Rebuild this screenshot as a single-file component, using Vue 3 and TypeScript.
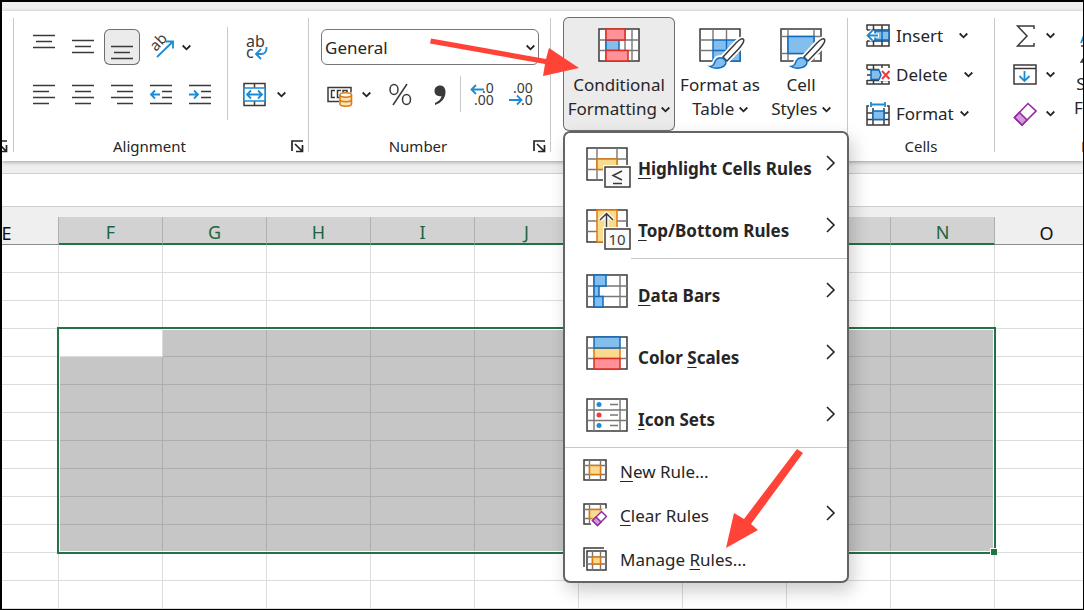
<script setup lang="ts">
import { h, ref } from 'vue'

const Chevron = () =>
  h('svg', { class: 'chev', width: 9, height: 7, viewBox: '0 0 9 7', 'aria-hidden': 'true' }, [
    h('path', { d: 'M.7 1.500l3.800 3.800 3.800-3.800', fill: 'none', stroke: '#242424', 'stroke-width': 1.8 }),
  ])

const Launcher = () =>
  h('svg', { width: 13, height: 13, viewBox: '0 0 13 13', 'aria-hidden': 'true' }, [
    h('path', { d: 'M1 11V1h11M4 4l7 7M11.500 5v6.500H5', fill: 'none', stroke: '#242424', 'stroke-width': 1.7 }),
  ])

const Arrow = () =>
  h('svg', { class: 'more', width: 10, height: 16, viewBox: '0 0 10 16', 'aria-hidden': 'true' }, [
    h('path', { d: 'M1 1l7 7-7 7', fill: 'none', stroke: '#242424', 'stroke-width': 1.6 }),
  ])

interface Tool {
  name: string
  lines: string
  accent?: string
}

const vertical: Tool[] = [
  { name: 'Top Align', lines: 'M7 6.500h22M10 12.500h16M7 18.500h22' },
  { name: 'Middle Align', lines: 'M7 11.500h22M10 17.500h16M7 23.500h22' },
  { name: 'Bottom Align', lines: 'M7 17.500h22M10 23.500h16M7 29.500h22' },
]

const horizontal: Tool[] = [
  { name: 'Align Left', lines: 'M7 9.500h22M7 15.500h16M7 21.500h22M7 27.500h16' },
  { name: 'Center', lines: 'M7 9.500h22M10 15.500h16M7 21.500h22M10 27.500h16' },
  { name: 'Align Right', lines: 'M7 9.500h22M13 15.500h16M7 21.500h22M13 27.500h16' },
  { name: 'Decrease Indent', lines: 'M7 9.500h22M19 15.500h10M19 21.500h10M7 27.500h22', accent: 'M17 18.500H8M12 14.500l-4 4 4 4' },
  { name: 'Increase Indent', lines: 'M7 9.500h22M19 15.500h10M19 21.500h10M7 27.500h22', accent: 'M7 18.500h9M12 14.500l4 4-4 4' },
]

const numberFormat = ref('General')
const pressed = ref('Bottom Align')

const columns = ['E', 'F', 'G', 'H', 'I', 'J', 'K', 'L', 'M', 'N', 'O']
const rowCount = 13
const isSelectedColumn = (c: number) => c >= 1 && c <= 9
const isSelected = (r: number, c: number) => r >= 4 && r <= 11 && isSelectedColumn(c) && !(r === 4 && c === 1)
</script>

<template>
  <main class="window">
    <header class="ribbon">
      <section class="group cut">
        <button class="launch" aria-label="Font settings"><Launcher /></button>
      </section>
      <span class="sep"></span>

      <section class="group alignment">
        <div class="tools">
          <div class="cluster">
            <div class="row">
              <button
                v-for="t in vertical"
                :key="t.name"
                class="tool"
                :class="{ pressed: pressed === t.name }"
                :aria-label="t.name"
                @click="pressed = t.name"
              >
                <svg width="36" height="36" viewBox="0 0 36 36"><path :d="t.lines" class="ink" /></svg>
              </button>
              <button class="tool split" aria-label="Orientation">
                <svg width="36" height="36" viewBox="0 0 36 36">
                  <text x="13" y="23" transform="rotate(-47 13 23)" class="glyph" font-size="15">ab</text>
                  <path d="M14 28L30 12.500M23 12.500h7v7" class="blue" />
                </svg>
                <Chevron />
              </button>
            </div>
            <div class="row">
              <button v-for="t in horizontal" :key="t.name" class="tool" :aria-label="t.name">
                <svg width="36" height="36" viewBox="0 0 36 36">
                  <path :d="t.lines" class="ink" />
                  <path v-if="t.accent" :d="t.accent" class="blue" />
                </svg>
              </button>
            </div>
          </div>
          <span class="sep inner"></span>
          <div class="cluster">
            <button class="tool" aria-label="Wrap Text">
              <svg width="36" height="36" viewBox="0 0 36 36">
                <text x="10" y="18" class="glyph" font-size="16">ab</text>
                <text x="10" y="29" class="glyph" font-size="16">c</text>
                <path d="M30.500 18c.5 4-1.500 7-5 7h-5M25 20l-5 5 5 5" class="blue" />
              </svg>
            </button>
            <button class="tool split" aria-label="Merge and Center">
              <svg width="36" height="36" viewBox="0 0 36 36">
                <path d="M8 7.500h21v22H8zM18.500 8v4M18.500 25v4" class="ink" />
                <path d="M8 12h21v13H8z" fill="#fff" stroke="#1e8bd2" stroke-width="1.500" />
                <path d="M11 18.500h15M15 14.500l-4 4 4 4M22 14.500l4 4-4 4" class="blue" />
              </svg>
              <Chevron />
            </button>
          </div>
        </div>
        <footer class="caption">
          <h2>Alignment</h2>
          <button class="launch" aria-label="Alignment settings"><Launcher /></button>
        </footer>
      </section>
      <span class="sep"></span>

      <section class="group number">
        <div class="tools">
          <div class="cluster">
            <div class="combo">
              <select v-model="numberFormat" aria-label="Number Format">
                <option>General</option>
              </select>
              <Chevron />
            </div>
            <div class="row">
              <button class="tool split" aria-label="Accounting Number Format">
                <svg width="36" height="36" viewBox="0 0 36 36">
                  <path d="M18 25.500H7v-14h23v5" class="ink" />
                  <path d="M14 14.500h-3.500v7H14M20 14.500h-3.500v7h2M22 16.500v-2h4v2" class="ink" />
                  <path d="M19 19v9c0 3 11.500 3 11.500 0v-9" fill="#fbe3b8" stroke="#e07a10" stroke-width="1.600" />
                  <ellipse cx="24.750" cy="19" rx="5.750" ry="2.200" fill="#fff" stroke="#e07a10" stroke-width="1.600" />
                  <path d="M19 23.500c0 3 11.500 3 11.500 0" fill="none" stroke="#e07a10" stroke-width="1.600" />
                </svg>
                <Chevron />
              </button>
              <button class="tool" aria-label="Percent Style">
                <svg width="36" height="36" viewBox="0 0 36 36">
                  <path d="M25 8L11 29" class="ink" />
                  <ellipse cx="12" cy="13.500" rx="4" ry="5" class="ink" />
                  <ellipse cx="24.500" cy="23.500" rx="4" ry="5" class="ink" />
                </svg>
              </button>
              <button class="tool" aria-label="Comma Style">
                <svg width="36" height="36" viewBox="0 0 36 36">
                  <path d="M19 9.500c3.500 0 5.500 2.500 5.500 6.500 0 6-4 11-10.500 13v-2c4-1.800 6-4 6.500-7-4 1-7-1.500-7-5 0-3.200 2.300-5.500 5.500-5.500z" fill="#3b3a39" />
                </svg>
              </button>
              <span class="sep"></span>
              <button class="tool" aria-label="Increase Decimal">
                <svg width="36" height="36" viewBox="0 0 36 36">
                  <text x="18" y="17" class="glyph" font-size="14">.0</text>
                  <text x="10" y="29" class="glyph" font-size="14">.00</text>
                  <path d="M20 13.500H7.500M12 9l-4.500 4.500L12 18" class="blue" />
                </svg>
              </button>
              <button class="tool" aria-label="Decrease Decimal">
                <svg width="36" height="36" viewBox="0 0 36 36">
                  <text x="10" y="17" class="glyph" font-size="14">.00</text>
                  <text x="18" y="29" class="glyph" font-size="14">.0</text>
                  <path d="M6 24h12.500M14 19.500l4.500 4.500-4.500 4.500" class="blue" />
                </svg>
              </button>
            </div>
          </div>
        </div>
        <footer class="caption">
          <h2>Number</h2>
          <button class="launch" aria-label="Number settings"><Launcher /></button>
        </footer>
      </section>
      <span class="sep"></span>

      <section class="group styles">
        <div class="anchor">
          <button class="big pressed conditional" aria-haspopup="menu" aria-expanded="true">
            <svg width="42" height="42" viewBox="0 0 42 42">
              <path d="M1 1h40v32H1z" fill="#fff" stroke="#3b3a39" stroke-width="1.500" />
              <path d="M1 12h40M1 22.500h40M8 1v32M27 1v32M34 1v32" class="faint" />
              <path d="M8 12h13v10.500H8z" class="fill-blue" />
              <path d="M8 1h19v11H8zM8 22.500h22V33H8z" class="fill-red" />
            </svg>
            <span>Conditional</span>
            <span>Formatting <Chevron /></span>
          </button>

          <div class="menu" role="menu" aria-label="Conditional Formatting">
            <button class="item large" role="menuitem">
              <svg width="46" height="42" viewBox="0 0 46 42">
                <path d="M1 1h40v32H1z" fill="#fff" stroke="#3b3a39" stroke-width="1.500" />
                <path d="M1 12h40M1 22.500h40M11 1v32M31 1v32" class="faint" />
                <path d="M11 12h20v10.500H11z" class="fill-gold" />
                <path d="M17 18h29v23H17z" fill="#fff" />
                <path d="M19 20h25v20H19z" class="card" />
                <path d="M36 24l-9 4.500 9 4.500M27 36.500h9" class="ink" />
              </svg>
              <span><u>H</u>ighlight Cells Rules</span>
              <Arrow />
            </button>
            <button class="item large" role="menuitem">
              <svg width="46" height="42" viewBox="0 0 46 42">
                <path d="M1 1h40v32H1z" fill="#fff" stroke="#3b3a39" stroke-width="1.500" />
                <path d="M1 12h40M1 22.500h40" class="faint" />
                <path d="M11 1h20v32H11z" class="fill-gold" />
                <path d="M20.500 20V5M14 11l6.500-6.500L27 11" fill="none" stroke="#fff" stroke-width="4" />
                <path d="M20.500 20V5M14 11l6.500-6.500L27 11" class="ink" />
                <path d="M17 18h29v23H17z" fill="#fff" />
                <path d="M19 20h25v20H19z" class="card" />
                <text x="31" y="36" class="glyph" font-size="15" text-anchor="middle">10</text>
              </svg>
              <span><u>T</u>op/Bottom Rules</span>
              <Arrow />
            </button>
            <hr class="short" />
            <button class="item large" role="menuitem">
              <svg width="46" height="42" viewBox="0 0 46 42">
                <path d="M1 1h40v32H1z" fill="#fff" stroke="#3b3a39" stroke-width="1.500" />
                <path d="M1 12h40M1 22.500h40M8 1v32M34 1v32" class="faint" />
                <path d="M8 1h12v11H8zM8 12h5v10.500H8zM8 22.500h9V33H8z" class="fill-blue" />
              </svg>
              <span><u>D</u>ata Bars</span>
              <Arrow />
            </button>
            <button class="item large" role="menuitem">
              <svg width="46" height="42" viewBox="0 0 46 42">
                <path d="M1 1h40v32H1z" fill="#fff" stroke="#3b3a39" stroke-width="1.500" />
                <path d="M1 12h40M1 22.500h40" class="faint" />
                <path d="M8 12h26v10.500H8z" class="fill-gold" />
                <path d="M8 1h26v11H8z" class="fill-blue" />
                <path d="M8 22.500h26V33H8z" class="fill-red" />
              </svg>
              <span>Color <u>S</u>cales</span>
              <Arrow />
            </button>
            <button class="item large" role="menuitem">
              <svg width="46" height="42" viewBox="0 0 46 42">
                <path d="M1 1h40v32H1z" fill="#fff" stroke="#3b3a39" stroke-width="1.500" />
                <path d="M1 12h40M1 22.500h40M8 1v32M34 1v32M24 6.500h8M24 17h8M24 27.500h8" class="faint" />
                <circle cx="13" cy="6.500" r="2.500" fill="#1e8bd2" />
                <circle cx="13" cy="17" r="2.500" fill="#ee3b3b" />
                <circle cx="13" cy="27.500" r="2.500" fill="#1e8bd2" />
              </svg>
              <span><u>I</u>con Sets</span>
              <Arrow />
            </button>
            <hr />
            <button class="item" role="menuitem">
              <svg width="24" height="24" viewBox="0 0 24 24">
                <path d="M1 1h22v20H1z" fill="#fff" stroke="#3b3a39" stroke-width="1.500" />
                <path d="M1 6.500h22M1 15.500h22M6.500 1v20M17.500 1v20" class="faint" />
                <path d="M6.500 6.500h11v9h-11z" class="fill-gold" />
              </svg>
              <span><u>N</u>ew Rule...</span>
            </button>
            <button class="item" role="menuitem">
              <svg width="24" height="24" viewBox="0 0 24 24">
                <path d="M1 1h22v20H1z" fill="#fff" stroke="#3b3a39" stroke-width="1.500" />
                <path d="M1 6.500h22M1 15.500h22M6.500 1v20M17.500 1v20" class="faint" />
                <path d="M6.500 6.500h11v9h-11z" class="fill-gold" />
                <path d="M7 18L20 5.500h4V24H9z" fill="#fff" />
                <path d="M18.500 8.500l5 5-9 9-5-5z" fill="#fff" stroke="#962ba0" stroke-width="1.500" />
                <path d="M13 14l5 5-3.500 3.500-5-5z" fill="#d59bdc" stroke="#962ba0" stroke-width="1.500" />
              </svg>
              <span><u>C</u>lear Rules</span>
              <Arrow />
            </button>
            <button class="item" role="menuitem">
              <svg width="24" height="24" viewBox="0 0 24 24">
                <path d="M1 20V1h20" class="ink" />
                <path d="M4 4h19v19H4z" fill="#fff" stroke="#3b3a39" stroke-width="1.500" />
                <path d="M4 10h19M4 17h19M9.500 4v19M17.500 4v19" class="faint" />
                <path d="M9.500 10h8v7h-8z" class="fill-gold" />
              </svg>
              <span>Manage <u>R</u>ules...</span>
            </button>
          </div>
        </div>
        <button class="big table-format">
          <svg width="46" height="42" viewBox="0 0 46 42">
            <path d="M1 1h40v32H1z" fill="#fff" stroke="#3b3a39" stroke-width="1.500" />
            <path d="M14 12h27v21H14z" fill="#83beec" />
            <path d="M1 12h13M1 22.500h13M14 1v11M27.500 1v11" class="faint" />
            <path d="M14 12h27v21H14zM14 22.500h27M27.500 12v21" fill="none" stroke="#0f6cbd" stroke-width="1.400" />
            <path d="M44.500 11.500c1 1.500-1 5-5 9.500L28 33l-4-4L37 15c4-4 6.500-5 7.500-3.500zM11 38.500c4 0 4-3 5.500-6 2-3.500 7-3.500 9.500-.5 2 3 .5 6-4 7.500-4 1-8 1-11-1z" fill="#fff" stroke="#fff" stroke-width="5" />
            <path d="M44.500 11.500c1 1.500-1 5-5 9.500L28 33l-4-4L37 15c4-4 6.500-5 7.500-3.500z" fill="#fff" stroke="#3b3a39" stroke-width="1.500" />
            <path d="M11 38.500c4 0 4-3 5.500-6 2-3.500 7-3.500 9.500-.5 2 3 .5 6-4 7.500-4 1-8 1-11-1z" class="fill-blue" />
          </svg>
          <span>Format as</span>
          <span>Table <Chevron /></span>
        </button>
        <button class="big cell-styles">
          <svg width="46" height="42" viewBox="0 0 46 42">
            <path d="M1 1h40v32H1z" fill="#fff" stroke="#3b3a39" stroke-width="1.500" />
            <path d="M1 8.500h40M1 25.500h40M8 1v32M34 1v32" class="faint" />
            <path d="M8 8.500h26v17H8z" class="fill-blue" />
            <path d="M44.500 11.500c1 1.500-1 5-5 9.500L28 33l-4-4L37 15c4-4 6.500-5 7.500-3.500zM11 38.500c4 0 4-3 5.500-6 2-3.500 7-3.500 9.500-.5 2 3 .5 6-4 7.500-4 1-8 1-11-1z" fill="#fff" stroke="#fff" stroke-width="5" />
            <path d="M44.500 11.500c1 1.500-1 5-5 9.500L28 33l-4-4L37 15c4-4 6.500-5 7.500-3.500z" fill="#fff" stroke="#3b3a39" stroke-width="1.500" />
            <path d="M11 38.500c4 0 4-3 5.500-6 2-3.500 7-3.500 9.500-.5 2 3 .5 6-4 7.500-4 1-8 1-11-1z" class="fill-blue" />
          </svg>
          <span>Cell</span>
          <span>Styles <Chevron /></span>
        </button>
      </section>
      <span class="sep"></span>

      <section class="group cells">
        <div class="stack">
          <button class="line wide">
            <svg width="24" height="24" viewBox="0 0 24 24">
              <path d="M1 6V1h22v21H1v-5M1 6h22M1 17h22M7.500 1v5M16 1v21M7.500 17v5" class="ink" />
              <path d="M9 7h14v9H9z" class="fill-blue" />
              <path d="M16 7v9" stroke="#0f6cbd" stroke-width="1.500" />
              <path d="M13 11.500H1.500M6.500 6.500l-5 5 5 5" fill="none" stroke="#fff" stroke-width="4" />
              <path d="M12 11.500H1.500M6.500 6.500l-5 5 5 5" class="blue" />
            </svg>
            <span>Insert</span>
            <Chevron />
          </button>
          <button class="line wide">
            <svg width="24" height="24" viewBox="0 0 24 24">
              <path d="M1 6V2h22v4M1 6.500h22M1 17.500h22M1 17v4h22v-4M7.500 2v4M16 2v4M7.500 17v4M16 17v4M1 12h4" class="ink" />
              <path d="M13 5h11v13H13z" fill="#fff" />
              <path d="M5 7h8l2 5-2 4.500H5z" class="fill-blue" />
              <path d="M16 8l7.500 8M23.500 8L16 16" stroke="#ee3b3b" stroke-width="2" />
            </svg>
            <span>Delete</span>
            <Chevron />
          </button>
          <button class="line">
            <svg width="24" height="24" viewBox="0 0 24 24">
              <path d="M5 2.500h14M5 0v5M19 0v5" class="blue" />
              <path d="M3 4H1v19h22V4h-2M1 11h22M1 17.500h22M7 6v17M18 6v17" class="ink" />
              <path d="M7 9h11v8.500H7z" class="fill-blue" />
            </svg>
            <span>Format</span>
            <Chevron />
          </button>
        </div>
        <footer class="caption"><h2>Cells</h2></footer>
      </section>
      <span class="sep"></span>

      <section class="group editing">
        <div class="tools-row">
          <div class="stack">
            <button class="line" aria-label="AutoSum">
              <svg width="24" height="24" viewBox="0 0 24 24">
                <path d="M21 5V2H4.500L14 12 4.500 22H21v-3" class="ink" />
              </svg>
              <Chevron />
            </button>
            <button class="line" aria-label="Fill">
              <svg width="24" height="24" viewBox="0 0 24 24">
                <path d="M1 2h22v19H1zM1 5.500h22" class="ink" />
                <path d="M11.500 8v10M6.500 13l5 5 5-5" class="blue" />
              </svg>
              <Chevron />
            </button>
            <button class="line" aria-label="Clear">
              <svg width="24" height="24" viewBox="0 0 24 24">
                <path d="M15 1.500l8 7.500L9 23l-7.500-7.500z" fill="#fff" stroke="#962ba0" stroke-width="1.600" />
                <path d="M6.500 10.500L14 18l-5 5-7.500-7.500z" fill="#d59bdc" stroke="#962ba0" stroke-width="1.600" />
              </svg>
              <Chevron />
            </button>
          </div>
          <button class="big sort">
            <svg width="42" height="42" viewBox="0 0 42 42">
              <path d="M1 16L7 1l6 15M3 11h8" class="blue" />
              <path d="M1 19h11L1 35h11" class="ink" />
            </svg>
            <span>Sort &amp;</span>
            <span>Filter <Chevron /></span>
          </button>
        </div>
        <footer class="caption"><h2>Editing</h2></footer>
      </section>
    </header>

    <div class="formula-bar"></div>

    <section class="sheet">
      <table>
        <colgroup>
          <col v-for="c in columns.slice(0, -1)" :key="c" class="col" />
          <col />
        </colgroup>
        <thead>
          <tr>
            <th v-for="(c, i) in columns" :key="c" scope="col" :class="{ on: isSelectedColumn(i) }">{{ c }}</th>
          </tr>
        </thead>
        <tbody>
          <tr v-for="r in rowCount" :key="r">
            <td v-for="(c, i) in columns" :key="c" :class="{ on: isSelected(r, i) }"></td>
          </tr>
        </tbody>
      </table>
      <div class="selection"><i class="handle"></i></div>
    </section>

    <svg class="notes" width="1084" height="610" viewBox="0 0 1084 610" aria-hidden="true">
      <path d="M431 38.500l115 20.500 3-11 30 20-36 8 2-12-115-20.500z" />
      <path d="M797 449l6 4-52 71 7 6-32 18 8-35 10 6z" />
    </svg>
  </main>
</template>

<style>
body {
  margin: 0;
}
</style>

<style scoped>
.window {
  position: relative;
  box-sizing: border-box;
  min-height: 100vh;
  overflow: hidden;
  border: solid #000;
  border-width: 2px 1px 1px 2px;
  background: #efefef;
  color: #262626;
  font-family: 'Noto Sans', 'Open Sans', sans-serif;
  font-size: 17px;
}

button {
  margin: 0;
  padding: 0;
  border: 0;
  background: none;
  color: inherit;
  font: inherit;
  text-align: left;
}

svg {
  display: block;
  flex: none;
}

.ink {
  fill: none;
  stroke: #3b3a39;
  stroke-width: 1.5;
}
.blue {
  fill: none;
  stroke: #1e8bd2;
  stroke-width: 1.8;
}
.faint {
  fill: none;
  stroke: #797774;
  stroke-width: 1.4;
}
.fill-blue {
  fill: #83beec;
  stroke: #0f6cbd;
  stroke-width: 1.5;
}
.fill-red {
  fill: #ff9298;
  stroke: #e02b20;
  stroke-width: 1.5;
}
.fill-gold {
  fill: #f8db8f;
  stroke: #e07a10;
  stroke-width: 1.5;
}
.card {
  fill: #fafafa;
  stroke: #3b3a39;
  stroke-width: 1.5;
}
.glyph {
  fill: #3b3a39;
}

/* Ribbon */
.ribbon {
  position: relative;
  z-index: 2;
  display: flex;
  height: 150px;
  margin-top: 9px;
  background: #fff;
  box-shadow: 0 1px 4px rgba(0, 0, 0, 0.35);
}
.sep {
  flex: none;
  width: 1px;
  margin: 7px 0 9px;
  background: #c8c8c8;
}
.group {
  display: flex;
  flex: none;
  flex-direction: column;
  justify-content: space-between;
  box-sizing: border-box;
  padding: 5px 0 8px;
}
.cut {
  width: 11px;
  align-items: flex-end;
  justify-content: flex-end;
  padding-right: 5px;
}
.alignment {
  width: 294px;
}
.number {
  width: 241px;
}
.cells {
  width: 146px;
}
.editing {
  width: 160px;
}
.caption {
  display: flex;
  align-items: center;
  height: 13px;
  padding-right: 4px;
}
.caption h2 {
  flex: 1;
  margin: 0;
  padding-right: 6px;
  font-size: 15px;
  font-weight: 400;
  line-height: 13px;
  text-align: center;
}
.cells .caption,
.cells h2 {
  padding-right: 0;
}
.editing .caption {
  padding-left: 86px;
}
.editing h2 {
  text-align: left;
}
.tools {
  display: flex;
  padding: 13px 12px 0;
}
.cluster {
  display: flex;
  flex-direction: column;
  gap: 11px;
}
.row {
  display: flex;
  gap: 3px;
}
.row .sep {
  margin: 0;
}
.inner {
  margin: -2px 8px -8px 9px;
}
.tool {
  display: flex;
  align-items: center;
  box-sizing: border-box;
  width: 36px;
  height: 36px;
  border-radius: 6px;
}
.tool.pressed {
  background: #ebebeb;
  box-shadow: inset 0 0 0 1px #6e6e6e;
}
.split {
  gap: 5px;
  width: 58px;
}
.row:first-child .split {
  gap: 3px;
}
.combo {
  display: grid;
  align-items: center;
}
.combo > * {
  grid-area: 1 / 1;
}
.combo select {
  appearance: none;
  box-sizing: border-box;
  width: 218px;
  height: 36px;
  padding: 0 3px;
  border: 1px solid #767676;
  border-radius: 6px;
  background: #fff;
  color: inherit;
  font: inherit;
}
.combo .chev {
  justify-self: end;
  margin-right: 4px;
  pointer-events: none;
}

.styles {
  flex-direction: row;
  align-items: flex-start;
  justify-content: flex-start;
  gap: 3px;
  width: 296px;
  padding: 6px 0 0 12px;
}
.anchor {
  position: relative;
}
.big {
  display: flex;
  flex-direction: column;
  align-items: center;
  box-sizing: border-box;
  height: 114px;
  padding-top: 11px;
  border-radius: 6px;
  line-height: 24px;
  white-space: nowrap;
}
.big > svg + span {
  margin-top: 3px;
}
.big .chev {
  display: inline-block;
  vertical-align: 2px;
}
.big.pressed {
  background: #ebebeb;
  box-shadow: inset 0 0 0 1px #6e6e6e;
}
.conditional {
  width: 112px;
}
.table-format {
  width: 84px;
}
.cell-styles {
  width: 72px;
}
.table-format > svg,
.cell-styles > svg {
  margin-left: 4px;
}
.sort {
  width: 56px;
}

.stack {
  display: flex;
  flex-direction: column;
}
.line {
  display: flex;
  align-items: center;
  gap: 6px;
  height: 39px;
}
.cells .stack {
  padding-left: 18px;
}
.wide .chev {
  margin-left: 10px;
}
.tools-row {
  display: flex;
  padding-left: 18px;
}
.editing .stack {
  width: 60px;
}
.editing .line {
  gap: 9px;
}

/* Drop-down menu */
.menu {
  position: absolute;
  top: 100%;
  left: 0;
  box-sizing: border-box;
  width: 286px;
  padding-top: 1px;
  border: 2px solid #646464;
  border-radius: 7px;
  background: #fff;
  box-shadow: 4px 8px 18px rgba(0, 0, 0, 0.2);
}
.menu hr {
  height: 1px;
  margin: 0 0 1px;
  border: 0;
  background: #c8c8c8;
}
.menu .short {
  margin: 0 0 2px 66px;
}
.item {
  display: flex;
  align-items: center;
  gap: 13px;
  box-sizing: border-box;
  width: 100%;
  height: 44px;
  padding: 0 11px 0 18px;
  white-space: nowrap;
}
.large {
  gap: 6px;
  height: 62px;
  padding: 6px 11px 0 21px;
  font-weight: 700;
}
.large text {
  font-weight: 400;
}
.item .more {
  margin: 0 0 4px auto;
}
.large .more {
  margin-bottom: 10px;
}
.item u {
  text-decoration-thickness: 1px;
  text-underline-offset: 3px;
}

/* Worksheet */
.formula-bar {
  height: 32px;
  margin-top: 12px;
  border: solid #cfcfcf;
  border-width: 1px 0;
  background: #fff;
}
.sheet {
  position: relative;
  padding-top: 10px;
}
table {
  width: calc(100% + 63px);
  margin-left: -47px;
  border-spacing: 0;
  table-layout: fixed;
}
.col {
  width: 104px;
}
th,
td {
  box-sizing: border-box;
  height: 28px;
  padding: 0;
  border: solid #dcdcdc;
  border-width: 0 1px 1px 0;
  background: #fff;
}
th {
  padding-top: 4px;
  border-color: #b0b0b0;
  border-bottom-color: #8c8c8c;
  background: #efefef;
  color: #111;
  font-size: 18px;
  font-weight: 400;
  line-height: 22px;
}
th.on {
  border-bottom: 2px solid #217346;
  background: #d2d2d2;
  color: #1e6440;
}
td.on {
  border-color: #adadad;
  background: #c6c6c6;
}
.selection {
  position: absolute;
  top: 120px;
  left: 55px;
  box-sizing: border-box;
  width: 939px;
  height: 227px;
  border: 2px solid #217346;
  box-shadow: inset 0 0 0 1px #fff;
}
.handle {
  position: absolute;
  right: -3px;
  bottom: -3px;
  width: 6px;
  height: 6px;
  background: #217346;
  box-shadow: -1px -1px 0 #fff;
}

.notes {
  position: absolute;
  z-index: 3;
  top: -2px;
  left: -2px;
  fill: #ff4336;
  pointer-events: none;
}
</style>
